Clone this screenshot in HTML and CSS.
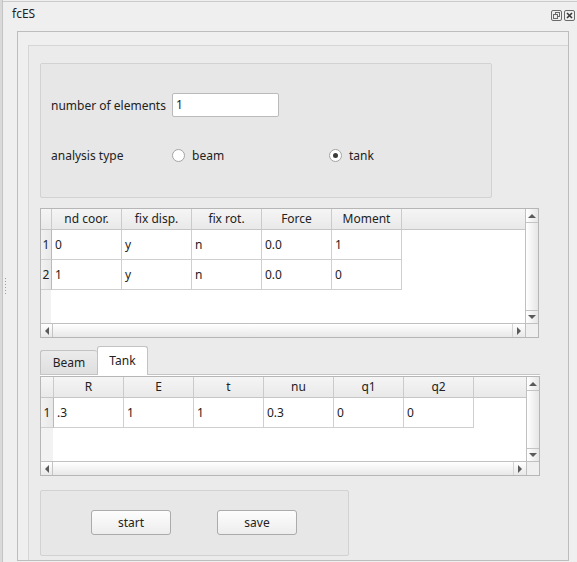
FILE: index.html
```html
<!DOCTYPE html>
<html>
<head>
<meta charset="utf-8">
<link rel="stylesheet" href="styles.css">
</head>
<body>
<div class="window">
  <div class="edge"></div>
  <div class="dock">
    <div class="titlebar">
      <span class="title">fcES</span>
      <div class="tb-icons">
        <svg class="tb-icon" width="11" height="11" viewBox="0 0 11 11">
          <rect x="0.5" y="0.5" width="10" height="10" rx="1.5" fill="none" stroke="#6a6a6a"/>
          <rect x="4.5" y="2.5" width="4" height="4" fill="none" stroke="#6a6a6a"/>
          <rect x="2.5" y="4.5" width="4" height="4" fill="#efefef" stroke="#6a6a6a"/>
        </svg>
        <svg class="tb-icon" width="11" height="11" viewBox="0 0 11 11">
          <rect x="0.5" y="0.5" width="10" height="10" rx="1.5" fill="none" stroke="#6a6a6a"/>
          <path d="M3 3 L8 8 M8 3 L3 8" stroke="#3a3a3a" stroke-width="1.6"/>
        </svg>
      </div>
    </div>
    <div class="dock-body">
      <div class="grip"><div class="dots"></div></div>
      <div class="frame">
        <div class="panel">
          <div class="groupbox params">
            <div class="form">
              <span class="lbl">number of elements</span>
              <div class="input">1</div>
              <span class="lbl">analysis type</span>
              <div class="radios">
                <span class="radio-opt beam"><span class="radio"></span>beam</span>
                <span class="radio-opt"><span class="radio checked"></span>tank</span>
              </div>
            </div>
          </div>

          <div class="table t1">
            <div class="viewport">
              <div class="hrow">
                <div class="hcell corner"></div>
                <div class="hcell">nd coor.</div>
                <div class="hcell">fix disp.</div>
                <div class="hcell">fix rot.</div>
                <div class="hcell">Force</div>
                <div class="hcell">Moment</div>
              </div>
              <div class="row">
                <div class="vh">1</div>
                <div class="cell">0</div>
                <div class="cell">y</div>
                <div class="cell">n</div>
                <div class="cell">0.0</div>
                <div class="cell">1</div>
              </div>
              <div class="row">
                <div class="vh">2</div>
                <div class="cell">1</div>
                <div class="cell">y</div>
                <div class="cell">n</div>
                <div class="cell">0.0</div>
                <div class="cell">0</div>
              </div>
            </div>
            <div class="vscroll">
              <div class="sbtn up"><span class="tri-up"></span></div>
              <div class="track"></div>
              <div class="sbtn down"><span class="tri-down"></span></div>
            </div>
            <div class="hscroll">
              <div class="sbtn left"><span class="tri-left"></span></div>
              <div class="track"></div>
              <div class="sbtn right"><span class="tri-right"></span></div>
            </div>
            <div class="corner-box"></div>
          </div>

          <div class="tabs">
            <div class="tab beam-tab">Beam</div>
            <div class="tab tank-tab">Tank</div>
          </div>
          <div class="pane">
            <div class="table t2">
              <div class="viewport">
                <div class="hrow">
                  <div class="hcell corner"></div>
                  <div class="hcell">R</div>
                  <div class="hcell">E</div>
                  <div class="hcell">t</div>
                  <div class="hcell">nu</div>
                  <div class="hcell">q1</div>
                  <div class="hcell">q2</div>
                </div>
                <div class="row">
                  <div class="vh">1</div>
                  <div class="cell">.3</div>
                  <div class="cell">1</div>
                  <div class="cell">1</div>
                  <div class="cell">0.3</div>
                  <div class="cell">0</div>
                  <div class="cell">0</div>
                </div>
              </div>
              <div class="vscroll">
                <div class="sbtn up"><span class="tri-up"></span></div>
                <div class="track"></div>
                <div class="sbtn down"><span class="tri-down"></span></div>
              </div>
              <div class="hscroll">
                <div class="sbtn left"><span class="tri-left"></span></div>
                <div class="track"></div>
                <div class="sbtn right"><span class="tri-right"></span></div>
              </div>
              <div class="corner-box"></div>
            </div>
          </div>

          <div class="groupbox actions">
            <button class="btn">start</button>
            <button class="btn">save</button>
          </div>
        </div>
      </div>
    </div>
  </div>
</div>
</body>
</html>
```

FILE: styles.css
```css
html, body {
  margin: 0;
  padding: 0;
}
body {
  width: 577px;
  height: 562px;
  overflow: hidden;
  background: #efefef;
  font-family: "Noto Sans", "Open Sans", sans-serif;
  font-size: 12px;
  color: #222;
}
.window {
  display: flex;
  height: 562px;
}
.edge {
  width: 2px;
  background: #d9d9d9;
  border-right: 1px solid #c4c4c4;
}
.dock {
  flex: 1;
  display: flex;
  flex-direction: column;
  margin-top: 1px;
  border-top: 1px solid #cbcbcb;
}
.titlebar {
  height: 29px;
  box-sizing: border-box;
  display: flex;
  justify-content: space-between;
  align-items: flex-start;
  padding: 4px 2px 0 9px;
}
.title {
  line-height: 16px;
}
.tb-icons {
  display: flex;
  gap: 2px;
  margin-top: 4px;
}
.tb-icon {
  display: block;
}
.dock-body {
  flex: 1;
  display: flex;
}
.grip {
  width: 14px;
  padding-top: 247px;
  box-sizing: border-box;
}
.dots {
  margin-left: 2px;
  width: 1px;
  height: 18px;
  background: repeating-linear-gradient(to bottom, #9c9c9c 0 1px, transparent 1px 3px);
}
.frame {
  width: 552px;
  height: 530px;
  box-sizing: border-box;
  border: 1px solid #bdbdbd;
  padding: 13px 0 0 10px;
  display: flex;
  flex-direction: column;
}
.panel {
  flex: 1;
  border-left: 1px solid #d6d6d6;
  border-top: 1px solid #d6d6d6;
  background: #ebebeb;
  padding: 17px 0 0 11px;
}
.groupbox {
  box-sizing: border-box;
  border: 1px solid #d2d2d2;
  border-radius: 2px;
  background: #e7e7e7;
}
.params {
  width: 452px;
  height: 135px;
  padding: 29px 0 0 10px;
}
.form {
  display: grid;
  grid-template-columns: 121px auto;
  grid-template-rows: 24px 20px;
  row-gap: 28px;
  align-items: center;
}
.input {
  width: 107px;
  height: 24px;
  box-sizing: border-box;
  border: 1px solid #bababa;
  border-radius: 2px;
  background: #fff;
  padding-left: 3px;
  line-height: 22px;
}
.radios {
  display: flex;
  align-items: center;
}
.radio-opt {
  display: flex;
  align-items: center;
}
.radio-opt.beam {
  width: 157px;
}
.radio {
  width: 13px;
  height: 13px;
  box-sizing: border-box;
  border: 1px solid #a4a4a4;
  border-radius: 50%;
  background: #fff;
  margin-right: 7px;
  display: flex;
  align-items: center;
  justify-content: center;
}
.radio.checked::after {
  content: "";
  width: 5px;
  height: 5px;
  border-radius: 50%;
  background: #3a3a3a;
}

/* tables */
.table {
  display: grid;
  grid-template-columns: 1fr 13px;
  grid-template-rows: 1fr 14px;
  box-sizing: border-box;
  border: 1px solid #b6b6b6;
  background: #fff;
}
.t1 {
  width: 499px;
  height: 130px;
  margin-top: 10px;
  --vhw: 11px;
}
.t2 {
  width: 500px;
  height: 100px;
  --vhw: 13px;
}
.viewport {
  overflow: hidden;
  background: linear-gradient(to right, #f2f2f2 calc(var(--vhw) - 1px), #fff calc(var(--vhw) - 1px));
}
.hrow {
  display: flex;
  height: 21px;
  box-sizing: border-box;
  border-bottom: 1px solid #c6c6c6;
  background: linear-gradient(#f5f5f5, #e9e9e9);
}
.hcell {
  width: 70px;
  flex: none;
  box-sizing: border-box;
  border-right: 1px solid #cbcbcb;
  text-align: center;
  line-height: 20px;
}
.hcell.corner {
  width: var(--vhw);
}
.row {
  display: flex;
  height: 30px;
}
.cell {
  width: 70px;
  flex: none;
  box-sizing: border-box;
  border-right: 1px solid #cfcfcf;
  border-bottom: 1px solid #cfcfcf;
  padding-left: 3px;
  line-height: 29px;
  background: #fff;
}
.vh {
  width: var(--vhw);
  flex: none;
  box-sizing: border-box;
  border-right: 1px solid #b9b9b9;
  border-bottom: 1px solid #cfcfcf;
  background: linear-gradient(to right, #f2f2f2, #e8e8e8);
  text-align: center;
  line-height: 29px;
}
.vscroll {
  display: flex;
  flex-direction: column;
  border-left: 1px solid #c0c0c0;
  background: linear-gradient(to right, #ffffff, #e6e6e6);
}
.hscroll {
  display: flex;
  border-top: 1px solid #c0c0c0;
  background: linear-gradient(#ffffff, #e8e8e8);
}
.track {
  flex: 1;
}
.sbtn {
  display: flex;
  align-items: center;
  justify-content: center;
  box-sizing: border-box;
}
.sbtn.up {
  height: 14px;
  border-bottom: 1px solid #c4c4c4;
}
.sbtn.down {
  height: 13px;
  border-top: 1px solid #c4c4c4;
}
.sbtn.left {
  width: 12px;
  border-right: 1px solid #c4c4c4;
}
.sbtn.right {
  width: 13px;
  border-left: 1px solid #d4d4d4;
}
.tri-up, .tri-down, .tri-left, .tri-right {
  width: 0;
  height: 0;
}
.tri-up {
  border-left: 4px solid transparent;
  border-right: 4px solid transparent;
  border-bottom: 4px solid #5a5a5a;
}
.tri-down {
  border-left: 4px solid transparent;
  border-right: 4px solid transparent;
  border-top: 4px solid #5a5a5a;
}
.tri-left {
  border-top: 4px solid transparent;
  border-bottom: 4px solid transparent;
  border-right: 4px solid #5a5a5a;
}
.tri-right {
  border-top: 4px solid transparent;
  border-bottom: 4px solid transparent;
  border-left: 4px solid #5a5a5a;
}
.corner-box {
  border-left: 1px solid #c0c0c0;
  border-top: 1px solid #c0c0c0;
  background: #efefef;
}

/* tabs */
.tabs {
  display: flex;
  align-items: flex-end;
  width: 500px;
  height: 29px;
  box-sizing: border-box;
  margin-top: 8px;
  border-bottom: 1px solid #c4c4c4;
}
.tab {
  box-sizing: border-box;
  border: 1px solid #c2c2c2;
  border-bottom: none;
  border-radius: 3px 3px 0 0;
  text-align: center;
  line-height: 16px;
}
.beam-tab {
  width: 57px;
  height: 24px;
  padding-top: 4px;
  background: linear-gradient(#ebebeb, #dfdfdf);
  border-right: none;
}
.tank-tab {
  width: 51px;
  height: 29px;
  margin-bottom: -1px;
  padding-top: 6px;
  background: #fff;
}
.pane {
  width: 500px;
  background: #fff;
  padding-top: 1px;
}

/* actions */
.actions {
  width: 309px;
  height: 66px;
  margin-top: 14px;
  padding: 19px 0 0 50px;
  display: flex;
  align-items: flex-start;
  gap: 46px;
}
.btn {
  width: 80px;
  height: 25px;
  box-sizing: border-box;
  border: 1px solid #ababab;
  border-radius: 3px;
  background: linear-gradient(#fdfdfd, #ededed);
  font-family: inherit;
  font-size: 12px;
  color: #222;
  padding: 0;
}
```
